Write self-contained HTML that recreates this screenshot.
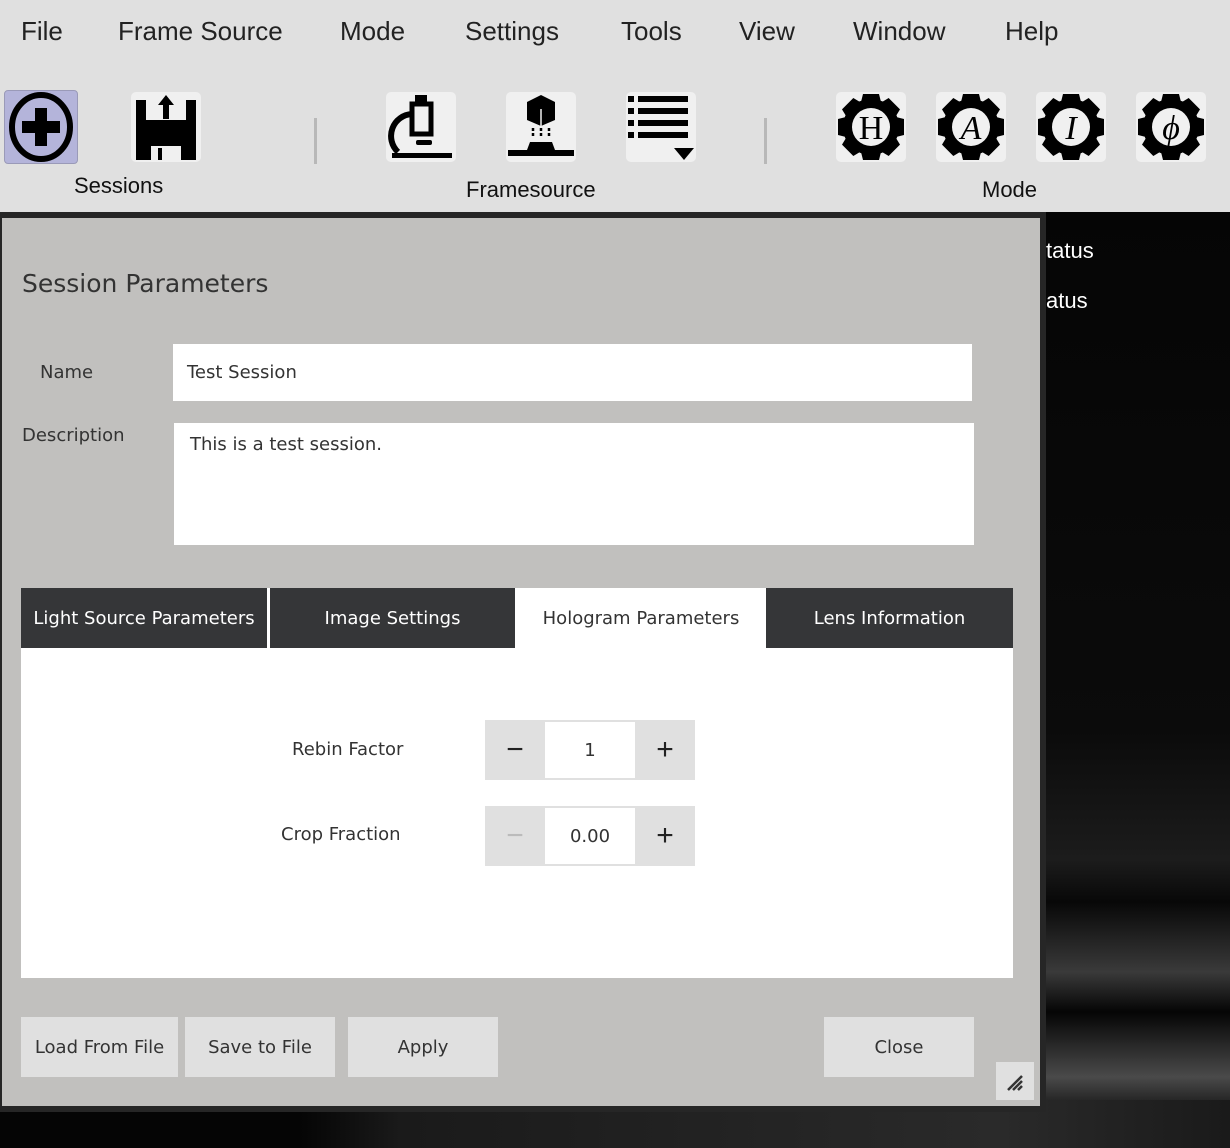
<!DOCTYPE html>
<html><head><meta charset="utf-8"><style>
*{margin:0;padding:0;box-sizing:border-box}
body{width:1230px;height:1148px;overflow:hidden;position:relative;font-family:"Liberation Sans",sans-serif;background:#050505}
.abs{position:absolute}
#top{left:0;top:0;width:1230px;height:212px;background:#e0e0e0}
.menu{top:16px;font-size:26px;color:#222}
.ib{background:#f0f0f0;border-radius:5px;width:70px;height:70px}
.lbl{font-size:22px;color:#111}
.sep{width:3px;height:46px;background:#b8b8b8;top:118px}
#bg{left:1040px;top:212px;width:190px;height:936px;background:linear-gradient(to bottom,#050505 0,#0b0b0b 520px,#1c1c1c 648px,#080808 690px,#3a3a3a 760px,#050505 800px,#4a4a4a 865px,#050505 910px,#050505 936px)}
#bb{left:0;top:1100px;width:1230px;height:48px;background:linear-gradient(to right,#050505 0,#050505 300px,#1a1a1a 400px,#2a2a2a 1000px,#1a1a1a 1230px)}
#dlgb{left:0;top:212px;width:1046px;height:900px;background:#262626}
#dlg{left:2px;top:218px;width:1038px;height:888px;background:#c1c0be;color:#333}
.t{font-family:"DejaVu Sans","Liberation Sans",sans-serif;color:#333}
.tab{top:588px;height:60px;background:#353638;font-size:18px;display:flex;align-items:center;justify-content:center}
.btn{background:#e0e0e0;height:60px;top:1017px;font-size:18px;display:flex;align-items:center;justify-content:center;color:#333}
.sp{background:#e0e0e0;width:210px;height:60px;left:485px}
.spv{position:absolute;left:60px;top:2px;width:90px;height:56px;background:#fff;display:flex;align-items:center;justify-content:center;font-size:18px;color:#333}
.pm{position:absolute;top:0;width:60px;height:60px;display:flex;align-items:center;justify-content:center;font-size:30px;color:#222}
</style></head><body>
<div id="top" class="abs"></div>
<div class="abs menu" style="left:21px">File</div>
<div class="abs menu" style="left:118px">Frame Source</div>
<div class="abs menu" style="left:340px">Mode</div>
<div class="abs menu" style="left:465px">Settings</div>
<div class="abs menu" style="left:621px">Tools</div>
<div class="abs menu" style="left:739px">View</div>
<div class="abs menu" style="left:853px">Window</div>
<div class="abs menu" style="left:1005px">Help</div>

<div class="abs" style="left:4px;top:90px;width:74px;height:74px;background:#b4b4da;border:1px solid #9a9ab8;border-radius:4px"></div>
<svg class="abs" style="left:4px;top:90px" width="74" height="74"><ellipse cx="37" cy="37" rx="29" ry="32" fill="none" stroke="#000" stroke-width="6"/><rect x="31" y="18" width="12" height="38" fill="#000"/><rect x="18" y="31" width="38" height="12" fill="#000"/></svg>
<div class="abs ib" style="left:131px;top:92px"></div>
<svg class="abs" style="left:131px;top:92px" width="70" height="70"><path d="M5 8h10v20h40v-20h10v60h-60z M20 50v18h30v-18z" fill="#000" fill-rule="evenodd"/><rect x="5" y="48" width="60" height="6" fill="#000"/><rect x="20" y="54" width="30" height="14" fill="#f0f0f0"/><rect x="27" y="56" width="4" height="12" fill="#000"/><path d="M35 3l-8 10h5v14h6v-14h5z" fill="#000"/></svg>
<div class="abs lbl" style="left:74px;top:173px">Sessions</div>
<div class="abs sep" style="left:314px"></div>

<div class="abs ib" style="left:386px;top:92px"></div>
<svg class="abs" style="left:386px;top:92px" width="70" height="70"><rect x="29" y="3" width="12" height="10" fill="#000"/><rect x="26" y="12" width="19" height="30" fill="none" stroke="#000" stroke-width="5"/><path d="M26 22 A22 22 0 0 0 12 60" fill="none" stroke="#000" stroke-width="6"/><rect x="30" y="48" width="16" height="5" rx="2" fill="#000"/><rect x="6" y="61" width="60" height="5" fill="#000"/></svg>
<div class="abs ib" style="left:506px;top:92px"></div>
<svg class="abs" style="left:506px;top:92px" width="70" height="70"><path d="M35 3l14 7v18l-14 6l-14-6v-18z" fill="#000"/><path d="M35 17v17" stroke="#f0f0f0" stroke-width="1.5"/><path d="M27 36v10M35 36v10M43 36v10" stroke="#000" stroke-width="2.5" stroke-dasharray="3 2"/><path d="M24 50h22l3 8h19v6h-66v-6h19z" fill="#000"/></svg>
<div class="abs ib" style="left:626px;top:92px"></div>
<svg class="abs" style="left:626px;top:92px" width="70" height="70"><g fill="#000"><rect x="2" y="4" width="6" height="6"/><rect x="12" y="4" width="50" height="6"/><rect x="2" y="16" width="6" height="6"/><rect x="12" y="16" width="50" height="6"/><rect x="2" y="28" width="6" height="6"/><rect x="12" y="28" width="50" height="6"/><rect x="2" y="40" width="6" height="6"/><rect x="12" y="40" width="50" height="6"/><path d="M48 56h20l-10 12z"/></g></svg>
<div class="abs lbl" style="left:466px;top:177px">Framesource</div>
<div class="abs sep" style="left:764px"></div>

<svg width="0" height="0" style="position:absolute"><defs><g id="gear"><circle cx="35" cy="35" r="28" fill="#000"/><g fill="#000"><path d="M27 2h16l2 8h-20z M27 68h16l2-8h-20z"/><path d="M27 2h16l2 8h-20z M27 68h16l2-8h-20z" transform="rotate(45 35 35)"/><path d="M27 2h16l2 8h-20z M27 68h16l2-8h-20z" transform="rotate(90 35 35)"/><path d="M27 2h16l2 8h-20z M27 68h16l2-8h-20z" transform="rotate(135 35 35)"/></g><circle cx="35" cy="35" r="19" fill="#f0f0f0"/></g></defs></svg>
<div class="abs ib" style="left:836px;top:92px"></div>
<svg class="abs" style="left:836px;top:92px" width="70" height="70"><use href="#gear"/><text x="35" y="47" text-anchor="middle" font-family="Liberation Serif,serif" font-size="34">H</text></svg>
<div class="abs ib" style="left:936px;top:92px"></div>
<svg class="abs" style="left:936px;top:92px" width="70" height="70"><use href="#gear"/><text x="35" y="47" text-anchor="middle" font-family="Liberation Serif,serif" font-style="italic" font-size="34">A</text></svg>
<div class="abs ib" style="left:1036px;top:92px"></div>
<svg class="abs" style="left:1036px;top:92px" width="70" height="70"><use href="#gear"/><text x="35" y="47" text-anchor="middle" font-family="Liberation Serif,serif" font-style="italic" font-size="34">I</text></svg>
<div class="abs ib" style="left:1136px;top:92px"></div>
<svg class="abs" style="left:1136px;top:92px" width="70" height="70"><use href="#gear"/><text x="35" y="47" text-anchor="middle" font-family="Liberation Serif,serif" font-style="italic" font-size="34">ϕ</text></svg>
<div class="abs lbl" style="left:982px;top:177px">Mode</div>

<div id="bg" class="abs"></div>
<div id="bb" class="abs"></div>
<div class="abs" style="left:1046px;top:238px;color:#fff;font-size:22px">tatus</div>
<div class="abs" style="left:1046px;top:288px;color:#fff;font-size:22px">atus</div>

<div id="dlgb" class="abs"></div>
<div id="dlg" class="abs"></div>
<div class="abs t" style="left:22px;top:269px;font-size:25px">Session Parameters</div>
<div class="abs t" style="left:40px;top:362px;font-size:18px">Name</div>
<div class="abs" style="left:173px;top:344px;width:799px;height:57px;background:#fff"></div>
<div class="abs t" style="left:187px;top:362px;font-size:18px">Test Session</div>
<div class="abs t" style="left:22px;top:425px;font-size:18px">Description</div>
<div class="abs" style="left:174px;top:423px;width:800px;height:122px;background:#fff"></div>
<div class="abs t" style="left:190px;top:434px;font-size:18px">This is a test session.</div>

<div class="abs" style="left:21px;top:588px;width:992px;height:390px;background:#fff"></div>
<div class="abs tab t" style="left:21px;width:246px;color:#fff">Light Source Parameters</div>
<div class="abs tab t" style="left:270px;width:245px;color:#fff">Image Settings</div>
<div class="abs tab t" style="left:516px;width:250px;background:#fff;color:#333">Hologram Parameters</div>
<div class="abs tab t" style="left:766px;width:247px;color:#fff">Lens Information</div>

<div class="abs t" style="left:292px;top:739px;font-size:18px">Rebin Factor</div>
<div class="abs sp" style="top:720px"><div class="pm" style="left:0">−</div><div class="spv t">1</div><div class="pm" style="left:150px">+</div></div>
<div class="abs t" style="left:281px;top:824px;font-size:18px">Crop Fraction</div>
<div class="abs sp" style="top:806px"><div class="pm" style="left:0;color:#bbb">−</div><div class="spv t">0.00</div><div class="pm" style="left:150px">+</div></div>

<div class="abs btn t" style="left:21px;width:157px">Load From File</div>
<div class="abs btn t" style="left:185px;width:150px">Save to File</div>
<div class="abs btn t" style="left:348px;width:150px">Apply</div>
<div class="abs btn t" style="left:824px;width:150px">Close</div>
<div class="abs" style="left:996px;top:1062px;width:38px;height:38px;background:#e0e0e0"></div>
<svg class="abs" style="left:996px;top:1062px" width="38" height="38"><path d="M12 28L26 14M17 28L26 19M22 28L26 24" stroke="#333" stroke-width="2.5"/></svg>
</body></html>
